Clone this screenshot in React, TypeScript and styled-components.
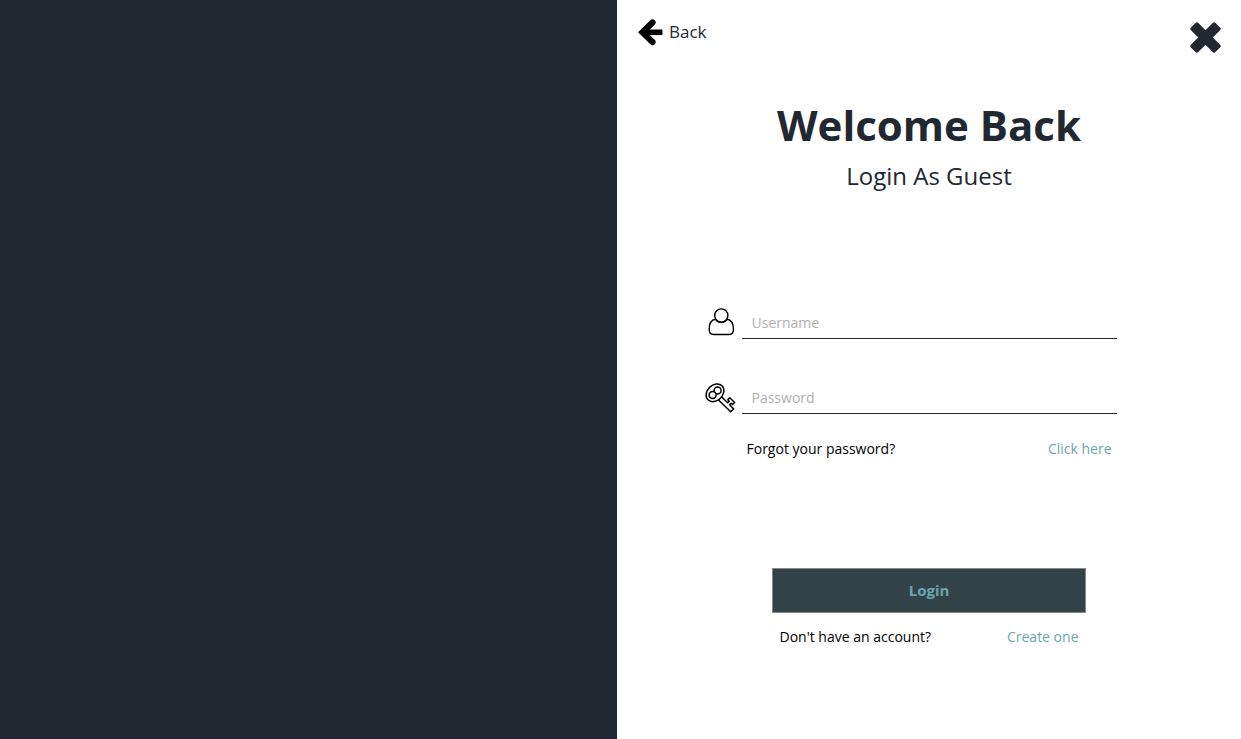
import React from "react";
import styled, { createGlobalStyle } from "styled-components";

const ink = "#222831";
const teal = "#6ba6ae";

const GlobalStyle = createGlobalStyle`
  *, *::before, *::after { box-sizing: border-box; }
  body {
    margin: 0;
    background: #fff;
    color: #000;
    font-family: "Open Sans", "Noto Sans", sans-serif;
    font-size: 14px;
    line-height: 20px;
  }
`;

const Page = styled.div`
  display: grid;
  grid-template-columns: 617fr 624fr;
  min-height: 100vh;
`;

const Cover = styled.aside`
  background: ${ink};
  border-bottom: 2px solid #252231;
`;

const Panel = styled.main`
  display: flex;
  flex-direction: column;
  align-items: center;
  min-width: 0;
`;

const TopBar = styled.header`
  display: flex;
  justify-content: space-between;
  align-items: flex-start;
  align-self: stretch;
  padding: 18px 20px 0;
`;

const IconButton = styled.button<{ $top?: number }>`
  display: flex;
  align-items: center;
  gap: 6px;
  margin: 0;
  padding: ${(p) => p.$top ?? 0}px 0 0;
  border: 0;
  background: none;
  color: ${ink};
  font: inherit;
  font-size: 17px;
  line-height: 28px;
  cursor: pointer;
`;

const Title = styled.h1`
  margin: 42px 0 0;
  color: ${ink};
  font-size: 42px;
  font-weight: 700;
  line-height: 60px;
`;

const Subtitle = styled.p`
  margin: 5px 0 0;
  color: ${ink};
  font-size: 24px;
  line-height: 32px;
`;

const Form = styled.form`
  display: flex;
  flex-direction: column;
  align-items: center;
  width: 100%;
  max-width: 375px;
  margin-top: 112px;
`;

const Fields = styled.div`
  display: grid;
  row-gap: 40px;
  align-self: stretch;
  margin: 0 0 25px -38px;
`;

const Field = styled.div`
  display: grid;
  grid-template-columns: 32px 1fr;
  column-gap: 6px;
  align-items: center;
`;

const FieldLabel = styled.label`
  display: flex;
`;

const TextInput = styled.input`
  width: 100%;
  min-width: 0;
  height: 35px;
  padding: 2px 10px 0;
  border: 0;
  border-bottom: 1px solid ${ink};
  border-radius: 0;
  outline: 0;
  background: transparent;
  color: ${ink};
  font: inherit;
  &::placeholder { color: #b0b0b0; opacity: 1; }
`;

const Prompt = styled.div<{ $inset: number }>`
  display: flex;
  justify-content: space-between;
  align-self: stretch;
  padding: 0 ${(p) => p.$inset}px;
`;

const TextLink = styled.a`
  color: ${teal};
  text-decoration: none;
`;

const Submit = styled.button`
  width: 314px;
  max-width: 100%;
  height: 45px;
  margin: 109px 0 14px;
  padding: 0 0 2px;
  border: 1px solid #84898f;
  background: #324249;
  color: ${teal};
  font: inherit;
  font-size: 15px;
  font-weight: 700;
  cursor: pointer;
`;

const ArrowIcon = () => (
  <svg width="26" height="28" viewBox="0 0 26 28" fill="none" stroke="#000" aria-hidden="true">
    <path d="M15.500 4.500 5.500 14.300l10 9.700" strokeWidth="6.200" strokeLinecap="round" />
    <path d="M6 14.300h19" strokeWidth="5.600" />
    <path d="M24.500 12.500v3.600" strokeWidth="2" strokeLinecap="round" />
  </svg>
);

const CrossIcon = () => (
  <svg width="31" height="31" viewBox="-15.5 -15.5 31 31" fill={ink} aria-hidden="true">
    <rect x="-17.4" y="-5.2" width="34.8" height="10.4" rx="2" transform="rotate(45)" />
    <rect x="-17.4" y="-5.2" width="34.8" height="10.4" rx="2" transform="rotate(-45)" />
  </svg>
);

const UserIcon = () => (
  <svg width="32" height="32" viewBox="0 0 32 32" fill="none" stroke="#000" strokeWidth="1.4" aria-hidden="true">
    <path d="M11.500 13.300c-4.200.5-6.300 4.500-6.300 10.200 0 3.500 1.300 5 4.400 5h15.400c3.100 0 4.400-1.500 4.400-5 0-5.700-2.100-9.700-6.300-10.200-3 4.200-8.600 4.200-11.600 0Z" />
    <circle cx="17.3" cy="9.5" r="6.6" />
  </svg>
);

const KeyIcon = () => (
  <svg width="32" height="32" viewBox="0 0 32 32" fill="#fff" stroke="#000" strokeWidth="1.5" strokeLinejoin="round" aria-hidden="true">
    <path d="M14 18.500 26.700 30.700 29.700 27.900 25.500 23.800 27.200 22.200 28.600 23.500 30.600 21.500 25.800 16.800 23.800 18.800 25.200 20.200 23.600 21.800 17.500 15.800Z" />
    <ellipse cx="11" cy="11.800" rx="9.900" ry="7.700" transform="rotate(-45 11 11.8)" />
    <circle cx="13.600" cy="9.600" r="3.500" />
    <circle cx="8.600" cy="14" r="3.500" />
  </svg>
);

export default function App() {
  return (
    <>
      <GlobalStyle />
      <Page>
        <Cover />
        <Panel>
          <TopBar>
            <IconButton type="button">
              <ArrowIcon />
              Back
            </IconButton>
            <IconButton type="button" aria-label="Close" $top={4}>
              <CrossIcon />
            </IconButton>
          </TopBar>
          <Title>Welcome Back</Title>
          <Subtitle>Login As Guest</Subtitle>
          <Form onSubmit={(e) => e.preventDefault()}>
            <Fields>
              <Field>
                <FieldLabel htmlFor="username" aria-label="Username">
                  <UserIcon />
                </FieldLabel>
                <TextInput id="username" placeholder="Username" autoComplete="username" />
              </Field>
              <Field>
                <FieldLabel htmlFor="password" aria-label="Password">
                  <KeyIcon />
                </FieldLabel>
                <TextInput id="password" type="password" placeholder="Password" autoComplete="current-password" />
              </Field>
            </Fields>
            <Prompt $inset={5}>
              <span>Forgot your password?</span>
              <TextLink href="#reset">Click here</TextLink>
            </Prompt>
            <Submit type="submit">Login</Submit>
            <Prompt $inset={38}>
              <span>Don't have an account?</span>
              <TextLink href="#register">Create one</TextLink>
            </Prompt>
          </Form>
        </Panel>
      </Page>
    </>
  );
}
